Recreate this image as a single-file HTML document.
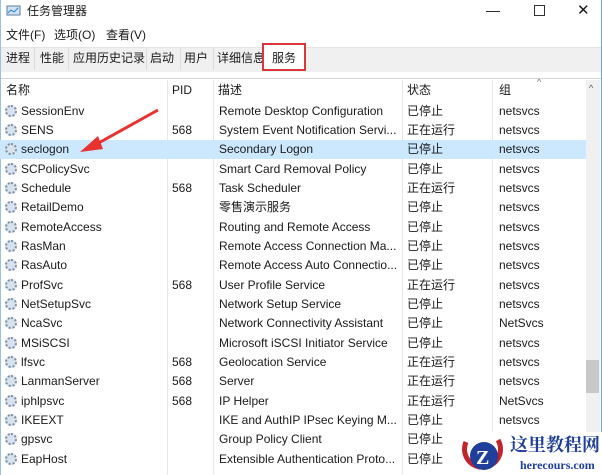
<!DOCTYPE html>
<html><head><meta charset="utf-8"><style>
body{margin:0;width:602px;height:475px;overflow:hidden;background:#fff;font-family:"Liberation Sans","Noto Sans CJK SC",sans-serif;font-size:12px;color:#1a1a1a;position:relative}
.a{position:absolute;white-space:nowrap;line-height:15px}
.row{position:absolute;left:0;width:586px;height:19px}
.row span{position:absolute;top:2px;line-height:15px;white-space:nowrap}
.ic{position:absolute;left:5px;top:3px;width:12px;height:12px;border-radius:50%;border:2px dotted #7a8fa6;box-sizing:border-box;background:#d8e2ec}
.tab{position:absolute;top:51px;line-height:15px}
.sep{position:absolute;top:80px;height:395px;border-left:1px solid #e6e6e6}
</style></head><body>
<div class="a" style="left:0;top:0;width:602px;height:475px;border-left:1px solid #9bc0e6;border-right:1px solid #6aa6e0;box-sizing:border-box"></div>
<svg class="a" style="left:6px;top:4px" width="16" height="14"><rect x="1" y="2" width="13" height="9" fill="#cfe3f5" stroke="#5d7d9b"/><polyline points="2,9 5,6 8,8 12,4" stroke="#2a7fd0" fill="none"/></svg>
<div class="a" style="left:27px;top:4px;font-size:12px">任务管理器</div>
<div class="a" style="left:486px;top:3px;font-size:14px">—</div>
<div class="a" style="left:534px;top:5px;width:9px;height:9px;border:1px solid #333"></div>
<div class="a" style="left:577px;top:3px;font-size:15px">✕</div>
<div class="a" style="left:6px;top:28px">文件(F)</div>
<div class="a" style="left:54px;top:28px">选项(O)</div>
<div class="a" style="left:106px;top:28px">查看(V)</div>
<div class="a" style="left:1px;top:47px;width:600px;height:24px;background:#f0f0f0;border-top:1px solid #e4e4e4"></div>
<div class="tab" style="left:6px">进程</div>
<div class="a" style="left:34px;top:48px;height:22px;border-left:1px solid #ddd"></div>
<div class="tab" style="left:40px">性能</div>
<div class="a" style="left:68px;top:48px;height:22px;border-left:1px solid #ddd"></div>
<div class="tab" style="left:73px">应用历史记录</div>
<div class="a" style="left:146px;top:48px;height:22px;border-left:1px solid #ddd"></div>
<div class="tab" style="left:150px">启动</div>
<div class="a" style="left:180px;top:48px;height:22px;border-left:1px solid #ddd"></div>
<div class="tab" style="left:184px">用户</div>
<div class="a" style="left:213px;top:48px;height:22px;border-left:1px solid #ddd"></div>
<div class="tab" style="left:217px">详细信息</div>
<div class="a" style="left:262px;top:43px;width:44px;height:28px;background:#fff;border:2px solid #d9373a;box-sizing:border-box"></div>
<div class="tab" style="left:272px">服务</div>
<div class="a" style="left:1px;top:78px;width:600px;border-top:1px solid #d4d4d4"></div>
<div class="sep" style="left:167px"></div><div class="sep" style="left:213px"></div><div class="sep" style="left:402px"></div><div class="sep" style="left:492px"></div>
<div class="a" style="left:6px;top:83px">名称</div>
<div class="a" style="left:172px;top:83px">PID</div>
<div class="a" style="left:218px;top:83px">描述</div>
<div class="a" style="left:407px;top:83px">状态</div>
<div class="a" style="left:499px;top:83px">组</div>
<div class="a" style="left:537px;top:75px;font-size:9px;color:#777">^</div>
<div class="a" style="left:586px;top:80px;width:14px;height:395px;background:#f0f0f0"></div>
<div class="a" style="left:586px;top:360px;width:13px;height:33px;background:#c8c8c8"></div>
<div class="a" style="left:589px;top:81px;font-size:9px;color:#555">^</div>
<div class="a" style="left:0;top:140px;width:586px;height:19px;background:#cce8ff"></div>
<div class="row" style="top:102px"><i class="ic"></i><span style="left:21px">SessionEnv</span><span style="left:219px">Remote Desktop Configuration</span><span style="left:407px">已停止</span><span style="left:499px">netsvcs</span></div>
<div class="row" style="top:121px"><i class="ic"></i><span style="left:21px">SENS</span><span style="left:172px">568</span><span style="left:219px">System Event Notification Servi...</span><span style="left:407px">正在运行</span><span style="left:499px">netsvcs</span></div>
<div class="row" style="top:140px"><i class="ic"></i><span style="left:21px">seclogon</span><span style="left:219px">Secondary Logon</span><span style="left:407px">已停止</span><span style="left:499px">netsvcs</span></div>
<div class="row" style="top:160px"><i class="ic"></i><span style="left:21px">SCPolicySvc</span><span style="left:219px">Smart Card Removal Policy</span><span style="left:407px">已停止</span><span style="left:499px">netsvcs</span></div>
<div class="row" style="top:179px"><i class="ic"></i><span style="left:21px">Schedule</span><span style="left:172px">568</span><span style="left:219px">Task Scheduler</span><span style="left:407px">正在运行</span><span style="left:499px">netsvcs</span></div>
<div class="row" style="top:198px"><i class="ic"></i><span style="left:21px">RetailDemo</span><span style="left:219px">零售演示服务</span><span style="left:407px">已停止</span><span style="left:499px">netsvcs</span></div>
<div class="row" style="top:218px"><i class="ic"></i><span style="left:21px">RemoteAccess</span><span style="left:219px">Routing and Remote Access</span><span style="left:407px">已停止</span><span style="left:499px">netsvcs</span></div>
<div class="row" style="top:237px"><i class="ic"></i><span style="left:21px">RasMan</span><span style="left:219px">Remote Access Connection Ma...</span><span style="left:407px">已停止</span><span style="left:499px">netsvcs</span></div>
<div class="row" style="top:256px"><i class="ic"></i><span style="left:21px">RasAuto</span><span style="left:219px">Remote Access Auto Connectio...</span><span style="left:407px">已停止</span><span style="left:499px">netsvcs</span></div>
<div class="row" style="top:276px"><i class="ic"></i><span style="left:21px">ProfSvc</span><span style="left:172px">568</span><span style="left:219px">User Profile Service</span><span style="left:407px">正在运行</span><span style="left:499px">netsvcs</span></div>
<div class="row" style="top:295px"><i class="ic"></i><span style="left:21px">NetSetupSvc</span><span style="left:219px">Network Setup Service</span><span style="left:407px">已停止</span><span style="left:499px">netsvcs</span></div>
<div class="row" style="top:314px"><i class="ic"></i><span style="left:21px">NcaSvc</span><span style="left:219px">Network Connectivity Assistant</span><span style="left:407px">已停止</span><span style="left:499px">NetSvcs</span></div>
<div class="row" style="top:334px"><i class="ic"></i><span style="left:21px">MSiSCSI</span><span style="left:219px">Microsoft iSCSI Initiator Service</span><span style="left:407px">已停止</span><span style="left:499px">netsvcs</span></div>
<div class="row" style="top:353px"><i class="ic"></i><span style="left:21px">lfsvc</span><span style="left:172px">568</span><span style="left:219px">Geolocation Service</span><span style="left:407px">正在运行</span><span style="left:499px">netsvcs</span></div>
<div class="row" style="top:372px"><i class="ic"></i><span style="left:21px">LanmanServer</span><span style="left:172px">568</span><span style="left:219px">Server</span><span style="left:407px">正在运行</span><span style="left:499px">netsvcs</span></div>
<div class="row" style="top:392px"><i class="ic"></i><span style="left:21px">iphlpsvc</span><span style="left:172px">568</span><span style="left:219px">IP Helper</span><span style="left:407px">正在运行</span><span style="left:499px">NetSvcs</span></div>
<div class="row" style="top:411px"><i class="ic"></i><span style="left:21px">IKEEXT</span><span style="left:219px">IKE and AuthIP IPsec Keying M...</span><span style="left:407px">已停止</span><span style="left:499px">netsvcs</span></div>
<div class="row" style="top:430px"><i class="ic"></i><span style="left:21px">gpsvc</span><span style="left:219px">Group Policy Client</span><span style="left:407px">已停止</span></div>
<div class="row" style="top:450px"><i class="ic"></i><span style="left:21px">EapHost</span><span style="left:219px">Extensible Authentication Proto...</span><span style="left:407px">已停止</span></div>
<svg class="a" style="left:0;top:0" width="602" height="475">
<line x1="158" y1="110" x2="95" y2="145" stroke="#e8322f" stroke-width="3"/>
<polygon points="80,152 98,136 103,149" fill="#e8322f"/>
</svg>
<div class="a" style="left:458px;top:432px;width:144px;height:43px;background:#fff"></div>
<svg class="a" style="left:458px;top:432px" width="50" height="43"><path d="M8,10 A18,18 0 1 0 40,8" stroke="#c0252b" stroke-width="5" fill="none"/><circle cx="26" cy="24" r="14" fill="#1f3f9a"/><text x="18" y="32" font-size="20" font-weight="bold" fill="#fff" font-family="Liberation Serif">Z</text></svg>
<div class="a" style="left:510px;top:435px;font-size:18px;line-height:20px;font-weight:bold;color:#1f3f9a;font-family:'Liberation Serif','Noto Serif CJK SC',serif">这里教程网</div>
<div class="a" style="left:520px;top:458px;font-size:12px;font-weight:bold;color:#1f3f9a;font-family:'Liberation Serif',serif">herecours.com</div>
</body></html>
